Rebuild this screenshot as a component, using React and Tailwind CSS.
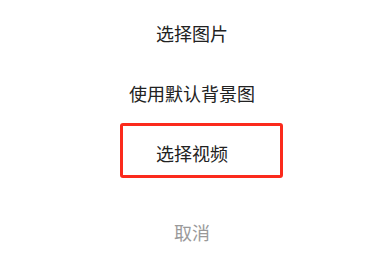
export default function App() {
  const font = { fontFamily: '"Noto Sans CJK SC", "Noto Sans", sans-serif' };
  return (
    <div className="w-[384px] h-[279px] bg-white flex flex-col items-center pt-[3px]" style={font}>
      <div className="h-[60px] w-full flex items-center justify-center text-[18px] text-[#222222]">选择图片</div>
      <div className="h-[60px] w-full flex items-center justify-center text-[18px] text-[#222222]">使用默认背景图</div>
      <div className="relative h-[60px] w-full flex items-center justify-center text-[18px] text-[#222222]">
        选择视频
        <div className="absolute left-[120px] top-0 w-[163px] h-[55px] border-[3px] border-[#fb2a1c] rounded-[3px]"></div>
      </div>
      <div className="mt-[19px] h-[60px] w-full flex items-center justify-center text-[18px] text-[#9a9a9a]">取消</div>
    </div>
  );
}
